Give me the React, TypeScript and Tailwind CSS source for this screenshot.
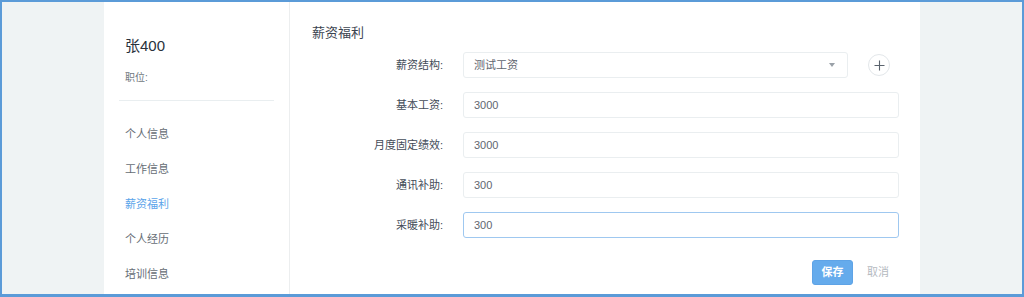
import React from "react";

const font = { fontFamily: '"Liberation Sans", "Noto Sans CJK SC", sans-serif' };

function Row({ label, children }: { label: string; children: React.ReactNode }) {
  return (
    <div className="flex items-center h-[26px]">
      <div className="w-[132px] text-right text-[11px] text-[#434c58] pr-[1px]">{label}</div>
      <div className="ml-[19px] flex items-center">{children}</div>
    </div>
  );
}

function Input({ value, focus }: { value: string; focus?: boolean }) {
  return (
    <div
      className={
        "w-[436px] h-[26px] rounded-[3px] border bg-white flex items-center pl-[10px] text-[11px] text-[#5f6670] " +
        (focus ? "border-[#9fc8f0]" : "border-[#eaeef0]")
      }
    >
      {value}
    </div>
  );
}

export default function App() {
  const nav = ["个人信息", "工作信息", "薪资福利", "个人经历", "培训信息"];
  return (
    <div
      style={font}
      className="w-[1024px] h-[297px] overflow-hidden bg-[#eff3f4] border-2 border-b-[3px] border-[#5b9bd8] pl-[102px]"
    >
      <div className="w-[816px] h-full bg-white flex">
        <div className="w-[186px] border-r border-[#eceeef] px-[15px] shrink-0">
          <div className="pl-[6px] pt-[34px] text-[15px] leading-[20px] text-[#2a323c]">张400</div>
          <div className="pl-[6px] mt-[15px] text-[10px] leading-[14px] text-[#6f7880]">职位:</div>
          <div className="mt-[15px] h-px bg-[#e9eef0]" />
          <div className="pt-[24px]">
            {nav.map((n, i) => (
              <div
                key={n}
                className={
                  "pl-[6px] h-[35px] leading-[18px] text-[11px] " +
                  (i === 2 ? "text-[#5ba4ea]" : "text-[#666d75]")
                }
              >
                {n}
              </div>
            ))}
          </div>
        </div>
        <div className="flex-1 pl-[22px]">
          <div className="pt-[21px] text-[13px] leading-[20px] text-[#3b4450]">薪资福利</div>
          <div className="mt-[9px] flex flex-col gap-[14px]">
            <Row label="薪资结构:">
              <div className="w-[385px] h-[26px] rounded-[3px] border border-[#eaeef0] bg-white flex items-center pl-[10px] pr-[12px] text-[11px] text-[#5f6670]">
                <span className="flex-1">测试工资</span>
                <svg width="6" height="4" viewBox="0 0 6 4">
                  <path d="M0 0 L6 0 L3 4 Z" fill="#9aa1a8" />
                </svg>
              </div>
              <div className="ml-[20px] w-[22px] h-[22px] rounded-full border border-[#e3e7ea] flex items-center justify-center">
                <svg width="11" height="11" viewBox="0 0 11 11">
                  <path d="M5.5 0.5 V10.5 M0.5 5.5 H10.5" stroke="#5a636d" strokeWidth="1.1" />
                </svg>
              </div>
            </Row>
            <Row label="基本工资:">
              <Input value="3000" />
            </Row>
            <Row label="月度固定绩效:">
              <Input value="3000" />
            </Row>
            <Row label="通讯补助:">
              <Input value="300" />
            </Row>
            <Row label="采暖补助:">
              <Input value="300" focus />
            </Row>
          </div>
          <div className="mt-[22px] w-[587px] flex justify-end gap-[4px]">
            <div className="w-[41px] h-[25px] rounded-[3px] bg-[#65abec] border border-[#5ea3e6] flex items-center justify-center text-[11px] text-white font-bold">
              保存
            </div>
            <div className="w-[42px] h-[25px] flex items-center justify-center text-[11px] text-[#b5babf]">
              取消
            </div>
          </div>
        </div>
      </div>
    </div>
  );
}
